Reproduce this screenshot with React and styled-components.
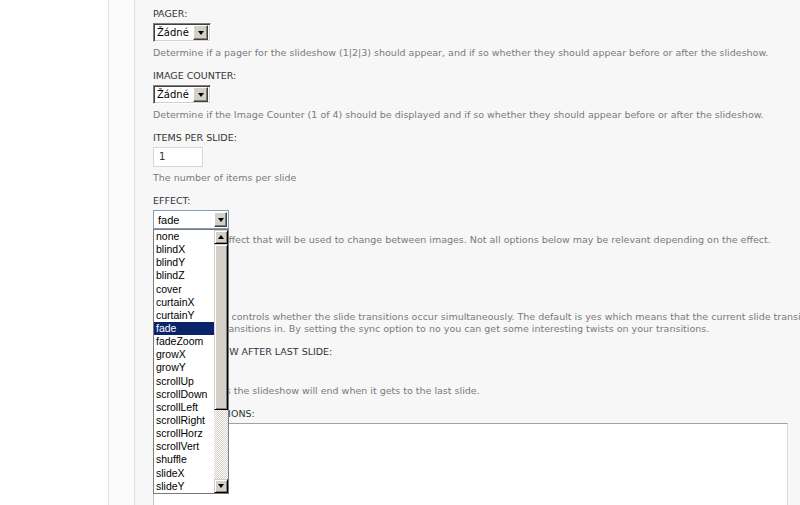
import React from "react";
import styled, { createGlobalStyle } from "styled-components";

const effects = [
  "none",
  "blindX",
  "blindY",
  "blindZ",
  "cover",
  "curtainX",
  "curtainY",
  "fade",
  "fadeZoom",
  "growX",
  "growY",
  "scrollUp",
  "scrollDown",
  "scrollLeft",
  "scrollRight",
  "scrollHorz",
  "scrollVert",
  "shuffle",
  "slideX",
  "slideY",
];

const GlobalStyle = createGlobalStyle`
  html, body {
    margin: 0;
    padding: 0;
    background: #fff;
    overflow: hidden;
  }
`;

const App = () => {
  return (
    <>
      <GlobalStyle />
      <Page>
        <Gutter />
        <Rail />
        <Content>
          <Field>
            <Label>Pager:</Label>
            <ClassicSelect>
              <span>Žádné</span>
              <ArrowButton>
                <DownArrow />
              </ArrowButton>
            </ClassicSelect>
            <Description>
              Determine if a pager for the slideshow (1|2|3) should appear, and
              if so whether they should appear before or after the slideshow.
            </Description>
          </Field>

          <Field>
            <Label>Image counter:</Label>
            <ClassicSelect>
              <span>Žádné</span>
              <ArrowButton>
                <DownArrow />
              </ArrowButton>
            </ClassicSelect>
            <Description>
              Determine if the Image Counter (1 of 4) should be displayed and if
              so whether they should appear before or after the slideshow.
            </Description>
          </Field>

          <Field>
            <Label>Items per slide:</Label>
            <TextInput>1</TextInput>
            <Description>The number of items per slide</Description>
          </Field>

          <Field>
            <Label>Effect:</Label>
            <SelectWrap>
              <EffectSelect>
                <span>fade</span>
                <ArrowButton $small>
                  <DownArrow />
                </ArrowButton>
              </EffectSelect>
              <DropList>
                <Options>
                  {effects.map((name) => (
                    <Option key={name} $selected={name === "fade"}>
                      {name}
                    </Option>
                  ))}
                </Options>
                <ScrollBar>
                  <ScrollButton>
                    <UpArrow />
                  </ScrollButton>
                  <Thumb />
                  <Track />
                  <ScrollButton>
                    <DownArrow />
                  </ScrollButton>
                </ScrollBar>
              </DropList>
            </SelectWrap>
            <Description>
              The Transition effect that will be used to change between images.
              Not all options below may be relevant depending on the effect.
            </Description>
          </Field>

          <Field>
            <Label>Sync:</Label>
            <RadioGroup>
              <RadioRow>
                <input type="radio" name="sync" defaultChecked /> Ano
              </RadioRow>
              <RadioRow>
                <input type="radio" name="sync" /> Ne
              </RadioRow>
            </RadioGroup>
            <Description>
              The sync option controls whether the slide transitions occur
              simultaneously. The default is yes which means that the current
              slide transitions out as
              <br />
              the next slide transitions in. By setting the sync option to no
              you can get some interesting twists on your transitions.
            </Description>
          </Field>

          <Field>
            <Label>Stop slideshow after last slide:</Label>
            <ClassicSelect>
              <span>Ne</span>
              <ArrowButton>
                <DownArrow />
              </ArrowButton>
            </ClassicSelect>
            <Description>
              When this is yes the slideshow will end when it gets to the last
              slide.
            </Description>
          </Field>

          <Field>
            <Label>Advanced options:</Label>
            <TextArea />
          </Field>
        </Content>
      </Page>
    </>
  );
};

const Page = styled.div`
  display: flex;
  height: 505px;
  font-family: "DejaVu Sans", Verdana, sans-serif;
`;

const Gutter = styled.div`
  width: 108px;
  flex-shrink: 0;
  background: #fff;
  border-right: 1px solid #e4e4e4;
`;

const Rail = styled.div`
  width: 25px;
  flex-shrink: 0;
  background: #fbfbfb;
  border-right: 1px solid #dedede;
`;

const Content = styled.div`
  flex: 1;
  background: #f7f7f7;
  padding: 8px 0 0 18px;
  min-width: 0;
`;

const Field = styled.div`
  margin-bottom: 11px;
`;

const Label = styled.div`
  font-size: 9.5px;
  line-height: 12px;
  color: #333;
  text-transform: uppercase;
  margin-bottom: 3px;
  white-space: nowrap;
`;

const Description = styled.div`
  font-size: 9.5px;
  line-height: 12px;
  color: #7a7a7a;
  margin-top: 5px;
  white-space: nowrap;
`;

const ClassicSelect = styled.div`
  box-sizing: border-box;
  width: 58px;
  height: 19px;
  background: #fff;
  border: 1px solid;
  border-color: #808080 #fff #fff #808080;
  box-shadow: inset 1px 1px #404040, inset -1px -1px #d4d0c8;
  display: flex;
  align-items: center;
  justify-content: space-between;
  padding: 1px 2px 1px 3px;
  font-size: 10px;
  color: #000;
`;

const ArrowButton = styled.div`
  box-sizing: border-box;
  width: ${(p) => (p.$small ? "13px" : "15px")};
  height: 15px;
  background: #d4d0c8;
  border: 1px solid;
  border-color: #fff #404040 #404040 #fff;
  box-shadow: inset -1px -1px #808080;
  display: flex;
  align-items: center;
  justify-content: center;
`;

const DownArrow = styled.span`
  width: 0;
  height: 0;
  border-left: 3.5px solid transparent;
  border-right: 3.5px solid transparent;
  border-top: 4px solid #000;
`;

const UpArrow = styled.span`
  width: 0;
  height: 0;
  border-left: 3.5px solid transparent;
  border-right: 3.5px solid transparent;
  border-bottom: 4px solid #000;
`;

const TextInput = styled.div`
  box-sizing: border-box;
  width: 50px;
  height: 20px;
  background: #fff;
  border: 1px solid #d6d6d6;
  padding: 3px 5px;
  font-size: 10px;
  line-height: 12px;
  color: #333;
`;

const SelectWrap = styled.div`
  position: relative;
  width: 76px;
`;

const EffectSelect = styled.div`
  box-sizing: border-box;
  width: 76px;
  height: 19px;
  background: #fff;
  border: 1px solid #7f9db9;
  display: flex;
  align-items: center;
  justify-content: space-between;
  padding: 1px 1px 1px 4px;
  font-family: "Liberation Sans", Arial, sans-serif;
  font-size: 11px;
  color: #000;
`;

const DropList = styled.div`
  position: absolute;
  top: 100%;
  left: 0;
  z-index: 2;
  box-sizing: border-box;
  width: 76px;
  height: 265px;
  background: #fff;
  border: 1px solid #7a7a7a;
  display: flex;
`;

const Options = styled.ul`
  flex: 1;
  list-style: none;
  margin: 0;
  padding: 0;
  font-family: "Liberation Sans", Arial, sans-serif;
  font-size: 10.5px;
`;

const Option = styled.li`
  height: 13.15px;
  line-height: 13.15px;
  padding-left: 2px;
  background: ${(p) => (p.$selected ? "#0a246a" : "transparent")};
  color: ${(p) => (p.$selected ? "#fff" : "#000")};
`;

const ScrollBar = styled.div`
  width: 14px;
  display: flex;
  flex-direction: column;
`;

const ScrollButton = styled.div`
  box-sizing: border-box;
  width: 14px;
  height: 14px;
  flex-shrink: 0;
  background: #d4d0c8;
  border: 1px solid;
  border-color: #d4d0c8 #000 #000 #d4d0c8;
  box-shadow: inset 1px 1px #fff, inset -1px -1px #808080;
  display: flex;
  align-items: center;
  justify-content: center;
`;

const Thumb = styled(ScrollButton)`
  height: 166px;
`;

const Track = styled.div`
  flex: 1;
  background-color: #fff;
  background-image: repeating-conic-gradient(#d4d0c8 0 25%, #fff 0 50%);
  background-size: 2px 2px;
`;

const RadioGroup = styled.div`
  display: flex;
  flex-direction: column;
`;

const RadioRow = styled.label`
  display: flex;
  align-items: center;
  height: 17px;
  font-size: 10px;
  color: #333;

  input {
    margin: 0 4px 0 0;
    width: 12px;
    height: 12px;
  }
`;

const TextArea = styled.textarea`
  display: block;
  box-sizing: border-box;
  width: 635px;
  height: 110px;
  margin: 0;
  background: #fff;
  border: 1px solid;
  border-color: #a0a0a0 #d8d8d8 #d8d8d8 #c4c4c4;
  font-family: "DejaVu Sans", Verdana, sans-serif;
  font-size: 10px;
`;

export default App;
